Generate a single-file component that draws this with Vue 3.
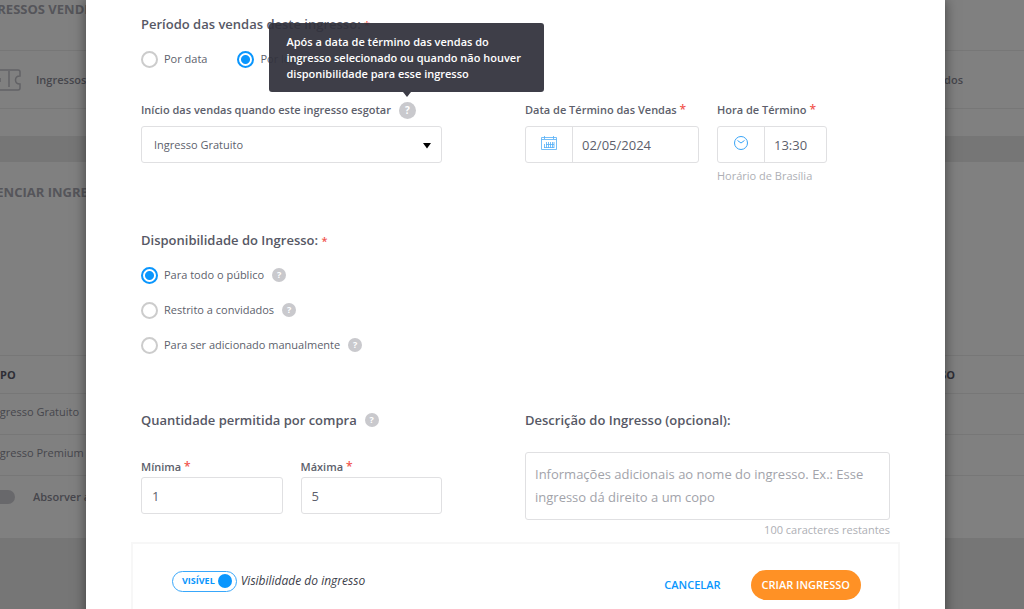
<script setup>
import { ref } from 'vue'

const saleMode = ref('lote')
const audience = ref('todos')
const visible = ref(true)
const startAfter = ref('Ingresso Gratuito')
const endDate = ref('02/05/2024')
const endTime = ref('13:30')
const min = ref('1')
const max = ref('5')
const description = ref('')

const audiences = [
  { id: 'todos', label: 'Para todo o público' },
  { id: 'convidados', label: 'Restrito a convidados' },
  { id: 'manual', label: 'Para ser adicionado manualmente' }
]
const tickets = ['Ingresso Gratuito', 'Ingresso Premium']
</script>

<template>
  <div class="app">
    <div class="page">
      <section class="panel sold">
        <h2>INGRESSOS VENDIDOS</h2>
        <div class="sold-row">
          <svg class="ticket" width="42" height="24" viewBox="0 0 42 24" fill="none" stroke="#626265" stroke-width="1.500">
            <path d="M3 2H38Q40 2 40 4V8Q35.500 8 35.500 12T40 16V20Q40 22 38 22H3Z" />
            <path d="M29 3V19M20 10V14" />
          </svg>
          <span>Ingressos</span>
          <span class="sold-end">vendidos</span>
        </div>
      </section>
      <section class="panel manage">
        <h2>GERENCIAR INGRESSOS</h2>
        <table>
          <thead>
            <tr><th>TIPO</th><th class="last">INGRESSO</th></tr>
          </thead>
          <tbody>
            <tr v-for="t in tickets" :key="t"><td>{{ t }}</td><td></td></tr>
          </tbody>
        </table>
        <div class="absorb"><span class="off"></span><span>Absorver a taxa</span></div>
      </section>
    </div>

    <div class="overlay">
      <form class="modal" role="dialog" aria-label="Criar ingresso" @submit.prevent>
        <fieldset class="period">
          <legend>Período das vendas deste ingresso: <i class="req">*</i></legend>
          <div class="inline-radios">
            <label class="radio"><input v-model="saleMode" type="radio" name="mode" value="data">Por data</label>
            <label class="radio"><input v-model="saleMode" type="radio" name="mode" value="lote">Por lote</label>
          </div>
        </fieldset>

        <div class="columns dates">
          <div class="field">
            <div class="label-row">
              <label for="start">Início das vendas quando este ingresso esgotar</label>
              <button type="button" class="help large" aria-label="Ajuda" aria-describedby="tip">?<span id="tip" class="tooltip" role="tooltip">Após a data de término das vendas do ingresso selecionado ou quando não houver disponibilidade para esse ingresso</span></button>
            </div>
            <div class="select-box">
              <select id="start" v-model="startAfter"><option>Ingresso Gratuito</option></select>
              <svg width="10" height="6" viewBox="0 0 10 6"><path d="M1 0H9L5 5.500Z" fill="#000" /></svg>
            </div>
          </div>
          <div class="end">
            <div class="field date">
              <label for="date">Data de Término das Vendas <i class="req">*</i></label>
              <div class="addon">
                <span class="icon">
                  <svg width="16" height="16" viewBox="0 0 16 16" fill="none" stroke="#54aff6">
                    <path d="M.5 2.500H15.500V14.500H.5ZM.5 4.500H15.500M3.500 1V4M12.500 1V4M3.500 9V13M5.500 7V13M7.500 7V13M9.500 7V13M11.500 7V13M13 7V13M3 12.500H13M5 9.500H13" stroke-width=".8" />
                  </svg>
                </span>
                <input id="date" v-model="endDate" type="text">
              </div>
            </div>
            <div class="field time">
              <label for="time">Hora de Término <i class="req">*</i></label>
              <div class="addon">
                <span class="icon">
                  <svg width="16" height="16" viewBox="0 0 16 16" fill="none" stroke="#38a4f7">
                    <circle cx="8" cy="8" r="6.500" /><path d="M4.500 5.500L8 8L11.500 5.500" />
                  </svg>
                </span>
                <input id="time" v-model="endTime" type="text">
              </div>
              <p class="note">Horário de Brasília</p>
            </div>
          </div>
        </div>

        <fieldset class="availability">
          <legend>Disponibilidade do Ingresso: <i class="req">*</i></legend>
          <div class="stack">
            <div v-for="a in audiences" :key="a.id" class="option">
              <label class="radio"><input v-model="audience" type="radio" name="aud" :value="a.id">{{ a.label }}</label>
              <button type="button" class="help" aria-label="Ajuda">?</button>
            </div>
          </div>
        </fieldset>

        <div class="columns details">
          <fieldset>
            <legend>Quantidade permitida por compra <button type="button" class="help" aria-label="Ajuda">?</button></legend>
            <div class="limits">
              <div class="field">
                <label for="min">Mínima <i class="req">*</i></label>
                <input id="min" v-model="min" class="box" type="text">
              </div>
              <div class="field">
                <label for="max">Máxima <i class="req">*</i></label>
                <input id="max" v-model="max" class="box" type="text">
              </div>
            </div>
          </fieldset>
          <div class="description">
            <label class="heading" for="desc">Descrição do Ingresso (opcional):</label>
            <textarea id="desc" v-model="description" rows="2" placeholder="Informações adicionais ao nome do ingresso. Ex.: Esse ingresso dá direito a um copo"></textarea>
            <p class="note">100 caracteres restantes</p>
          </div>
        </div>

        <footer>
          <label class="visibility">
            <span class="pill">VISÍVEL<input v-model="visible" type="checkbox" role="switch"></span>
            <em>Visibilidade do ingresso</em>
          </label>
          <button type="button" class="cancel">CANCELAR</button>
          <button type="submit" class="create">CRIAR INGRESSO</button>
        </footer>
      </form>
    </div>
  </div>
</template>

<style>
body { background: #767676; }
</style>

<style scoped>
* { box-sizing: border-box; margin: 0; }
.app {
  position: relative;
  height: 100vh;
  overflow: hidden;
  font: 11px/20px "Open Sans", sans-serif;
  color: #5d5f6c;
}
input, select, textarea, button { font: inherit; color: inherit; padding: 0; border: 0; background: none; outline: 0; }

/* page behind the dialog */
.page { display: flex; flex-direction: column; gap: 26px; margin-left: -34px; color: #46464c; }
.panel { background: #808080; }
.panel h2 { font-size: 13px; font-weight: 700; color: #55555a; line-height: 20px; }
.sold { height: 136px; }
.sold h2 { padding: 0 0 32px 7px; line-height: 18px; }
.sold-row { display: flex; align-items: center; height: 59px; padding-left: 14px; border: solid #777; border-width: 1px 0; font-weight: 600; }
.ticket { margin-right: 14px; }
.sold-end { margin-left: auto; padding-right: 61px; }
.manage { height: 376px; display: flex; flex-direction: column; }
.manage h2 { padding: 20px 0 153px 5px; }
table { width: 100%; border-collapse: collapse; }
th, td { height: 41px; padding: 0 0 4px 24px; text-align: left; border-bottom: 1px solid #777; font-weight: 400; }
th { height: 38px; padding-bottom: 0; font-weight: 700; color: #2e2e36; border-top: 1px solid #777; }
th.last { text-align: right; padding-right: 69px; }
.absorb { display: flex; align-items: center; gap: 18px; height: 42px; padding-left: 24px; font-weight: 600; }
.off { width: 25px; height: 14px; border-radius: 7px; background: #68686b; }

/* dialog */
.overlay { position: absolute; inset: 0; padding: 0 79px 0 86px; }
.modal { min-height: 100%; padding: 14px 55px 0; background: #fff; box-shadow: 0 0 12px rgba(0, 0, 0, .5); }
fieldset { border: 0; padding: 0; min-width: 0; }
legend, .heading { display: block; padding: 0; font-size: 13px; font-weight: 600; line-height: 20px; color: #565865; }
.req { color: #f1554e; font-style: normal; font-size: 12px; line-height: 0; }
legend .req { font-size: 11px; }
.inline-radios { display: flex; gap: 30px; padding-top: 16px; }
.radio { display: flex; align-items: center; gap: 6px; line-height: 18px; }
.radio input { appearance: none; flex: none; width: 17px; height: 17px; border: 2px solid #ccc; border-radius: 50%; background: #fff; }
.radio input:checked { border-color: #0a96fd; background: radial-gradient(circle, #0a96fd 4px, #fff 5px); }
.columns { display: grid; grid-template-columns: 301fr 365fr; gap: 83px; align-items: start; }
.dates { padding-top: 32px; }
.field { display: flex; flex-direction: column; }
.field label { font-weight: 600; }
.label-row { display: flex; align-items: center; gap: 8px; padding-bottom: 6px; }
.help { position: relative; flex: none; width: 14px; height: 14px; border-radius: 50%; background: #c9c9cd; color: #fff; font-size: 9px; font-weight: 700; line-height: 14px; text-align: center; }
.help.large { width: 17px; height: 17px; font-size: 10px; line-height: 17px; }
.tooltip {
  position: absolute;
  left: 50%;
  bottom: calc(100% + 10px);
  width: 275px;
  margin-left: -138px;
  padding: 11px 17px 10px;
  border-radius: 3px;
  background: rgba(50, 50, 61, .94);
  color: #fff;
  font-size: 11px;
  font-weight: 600;
  line-height: 16px;
  text-align: left;
}
.tooltip::after { content: ""; position: absolute; top: 100%; left: 50%; margin-left: -4px; border: 4px solid transparent; border-top: 5px solid #3b3b46; border-bottom: 0; }
.select-box { position: relative; }
.select-box select { appearance: none; display: block; width: 100%; height: 37px; padding: 0 12px; border: 1px solid #e0e0e2; border-radius: 3px; }
.select-box svg { position: absolute; right: 10px; top: 17px; }
.end { display: flex; gap: 18px; }
.date { width: 174px; gap: 6px; }
.time { width: 110px; gap: 6px; }
.time label, .date label { white-space: nowrap; }
.addon { display: flex; height: 37px; border: 1px solid #e0e0e2; border-radius: 3px; }
.icon { display: flex; align-items: center; justify-content: center; flex: none; width: 47px; padding-bottom: 3px; border-right: 1px solid #e0e0e2; }
.addon input { flex: 1; min-width: 0; padding-left: 9px; font-size: 13px; }
.note { color: #aeafb5; }
.time .note { margin-top: -3px; }
.availability { margin-top: 44px; }
.stack { display: flex; flex-direction: column; gap: 17px; padding-top: 16px; }
.option { display: flex; align-items: center; gap: 8px; }
.details { padding-top: 56px; }
.details legend { display: flex; align-items: center; gap: 8px; }
.limits { display: grid; grid-template-columns: 1fr 1fr; gap: 18px; padding-top: 27px; }
.box { width: 100%; height: 37px; padding: 0 10px; border: 1px solid #e0e0e2; border-radius: 3px; font-size: 13px; }
textarea { display: block; resize: none; width: 100%; height: 68px; margin-top: 22px; padding: 10px 9px; border: 1px solid #e0e0e2; border-radius: 3px; font-size: 13px; line-height: 23px; overflow: hidden; }
textarea::placeholder { color: #a2a3aa; }
.description .note { text-align: right; }
footer { display: flex; align-items: center; height: 86px; margin: 2px -10px 0; padding: 0 37px 0 39px; border: 2px solid #f7f7f7; }
.visibility { display: flex; align-items: center; gap: 4px; margin-right: auto; padding-bottom: 8px; }
.visibility em { font-size: 12px; color: #3c3e4a; }
.pill { display: flex; align-items: center; gap: 3px; height: 21px; padding: 0 4px 0 9px; border: 1px solid #38a7fb; border-radius: 11px; color: #0a96fd; font-size: 9px; font-weight: 700; }
.pill input { appearance: none; width: 14px; height: 14px; border-radius: 50%; background: #0a96fd; }
.cancel { margin-right: 30px; color: #0a96fd; font-weight: 600; }
.create { height: 30px; padding: 0 11px; border-radius: 15px; background: #ff9125; color: #fff; font-weight: 600; }
</style>
